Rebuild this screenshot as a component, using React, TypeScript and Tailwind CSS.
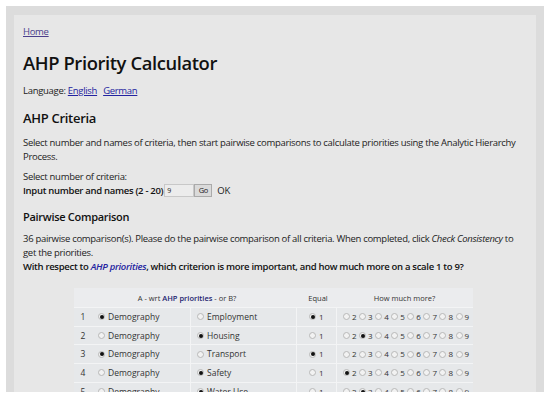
import React from 'react';

type Row = { n: number; a: string; b: string; pick: 'a' | 'b'; more: number };

const rows: Row[] = [
  { n: 1, a: 'Demography', b: 'Employment', pick: 'a', more: 1 },
  { n: 2, a: 'Demography', b: 'Housing', pick: 'b', more: 3 },
  { n: 3, a: 'Demography', b: 'Transport', pick: 'a', more: 1 },
  { n: 4, a: 'Demography', b: 'Safety', pick: 'b', more: 2 },
  { n: 5, a: 'Demography', b: 'Water Use', pick: 'b', more: 3 },
];

function Radio({ on }: { on: boolean }) {
  return (
    <span className="inline-flex items-center justify-center w-[7px] h-[7px] rounded-full border border-[#b8b8b8] bg-[#f2f2f2] shrink-0">
      {on && <span className="w-[4px] h-[4px] rounded-full bg-[#111]" />}
    </span>
  );
}

export default function App() {
  return (
    <div className="bg-white w-[550px] h-[399px] overflow-hidden pt-[6px] pl-[6px]" style={{ fontFamily: '"Open Sans", sans-serif' }}>
      <div className="w-[538px] h-[386px] overflow-hidden bg-[#dcdcdc] pt-[9px] pl-[8px] pr-[8px]">
        <div className="bg-[#e7e7e7] h-[420px] pl-[9px] pr-[9px] pt-[10px] text-[#222] text-[9.5px] leading-[14px] tracking-[-0.3px]">
          {/* Header */}
          <a href="#" className="underline text-[#4b3f8c]">Home</a>
          <h1 className="text-[18.4px] font-semibold text-[#111] mt-[12px] leading-[24px] tracking-[-0.4px]">AHP Priority Calculator</h1>
          <p className="mt-[9px]">
            Language: <a href="#" className="underline text-[#2323a0]">English</a>
            <a href="#" className="underline text-[#2323a0] ml-[6px]">German</a>
          </p>

          {/* Criteria */}
          <h2 className="text-[13px] font-semibold text-[#111] mt-[10px] leading-[20px]">AHP Criteria</h2>
          <p className="mt-[8px]">
            Select number and names of criteria, then start pairwise comparisons to calculate priorities using the Analytic Hierarchy Process.
          </p>
          <p className="mt-[6px]">Select number of criteria:</p>
          <div className="flex items-center h-[13px]">
            <span className="font-semibold text-[#111]">Input number and names (2 - 20)</span>
            <input
              defaultValue="9"
              className="ml-[1px] w-[30px] h-[13px] bg-[#ececec] border border-[#c8c8c8] text-[7px] px-[2px] outline-none"
            />
            <button className="h-[13px] w-[18px] bg-[#dadada] border border-[#aaa] text-[7.5px] leading-[11px]">Go</button>
            <span className="ml-[5px]">OK</span>
          </div>

          {/* Pairwise */}
          <h3 className="text-[11px] font-semibold text-[#111] mt-[11px] leading-[18px]">Pairwise Comparison</h3>
          <p className="mt-[6px]">
            36 pairwise comparison(s). Please do the pairwise comparison of all criteria. When completed, click{' '}
            <i>Check Consistency</i> to get the priorities.
          </p>
          <p className="font-semibold text-[#111]">
            With respect to <i className="text-[#2323a0]">AHP priorities</i>, which criterion is more important, and how much more on a scale 1 to 9?
          </p>

          <div className="ml-[51px] mt-[14px] w-[399px] bg-[#ebecee] tracking-normal">
            <div className="flex h-[19px] items-center text-[7.5px] text-[#333]">
              <div className="w-[226px] text-center">
                A - wrt <span className="font-semibold text-[#1c1c70]">AHP priorities</span> - or B?
              </div>
              <div className="w-[36px] text-center">Equal</div>
              <div className="flex-1 text-center">How much more?</div>
            </div>
            {rows.map((r) => (
              <div key={r.n} className="flex h-[18.7px] items-center border-t border-[#f3f4f5] bg-[#e6e8ea] text-[8.5px] text-[#333]">
                <div className="w-[18px] text-center">{r.n}</div>
                <div className="w-[98px] flex items-center gap-[3px] pl-[6px]">
                  <Radio on={r.pick === 'a'} />
                  <span>{r.a}</span>
                </div>
                <div className="w-[106px] flex items-center gap-[3px] pl-[6px] border-l border-[#f3f4f5] h-full">
                  <Radio on={r.pick === 'b'} />
                  <span>{r.b}</span>
                </div>
                <div className="w-[40px] flex items-center gap-[3px] pl-[12px] text-[8px] border-l border-[#f3f4f5] h-full">
                  <Radio on={r.more === 1} />
                  <span>1</span>
                </div>
                <div className="flex-1 flex items-center pl-[6px] text-[8px] border-l border-[#f3f4f5] h-full">
                  {[2, 3, 4, 5, 6, 7, 8, 9].map((v) => (
                    <span key={v} className="flex items-center gap-[2px] mr-[2.5px]">
                      <Radio on={r.more === v} />
                      <span>{v}</span>
                    </span>
                  ))}
                </div>
              </div>
            ))}
          </div>
        </div>
      </div>
    </div>
  );
}
